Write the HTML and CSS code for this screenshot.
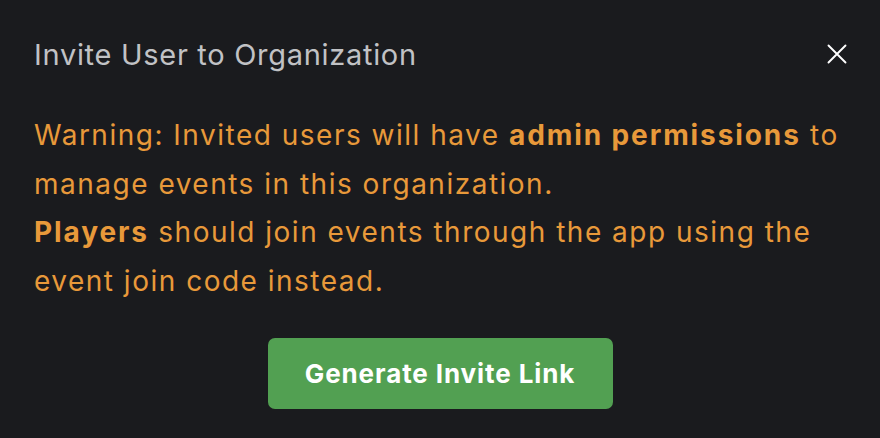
FILE: index.html
```html
<!DOCTYPE html>
<html>
<head>
<meta charset="utf-8">
<link rel="stylesheet" href="styles.css">
</head>
<body>
<div class="modal">
  <div class="header">
    <h2 class="title">Invite User to Organization</h2>
    <button class="close" aria-label="Close">
      <svg width="20" height="20" viewBox="0 0 20 20"><path d="M1.5 1.5 L18.5 18.5 M18.5 1.5 L1.5 18.5" stroke="#ffffff" stroke-width="1.9" stroke-linecap="round"/></svg>
    </button>
  </div>
  <div class="warning">
    <p>Warning: Invited users will have <strong>admin permissions</strong> to manage events in this organization.</p>
    <p><strong>Players</strong> should join events through the app using the event join code instead.</p>
  </div>
  <div class="actions">
    <button class="generate">Generate Invite Link</button>
  </div>
</div>
</body>
</html>
```
FILE: styles.css
```css
html, body {
  margin: 0;
  padding: 0;
  background: #1a1b1e;
  height: 100%;
}
body {
  font-family: Inter, "Noto Sans", sans-serif;
}
.modal {
  padding: 0 34px;
  box-sizing: border-box;
  width: 880px;
  height: 438px;
}
.header {
  display: flex;
  align-items: center;
  justify-content: space-between;
  height: 108px;
}
.title {
  margin: 0;
  font-size: 29px;
  letter-spacing: 0.7px;
  font-weight: 400;
  color: #c1c2c5;
}
.close {
  background: none;
  border: 0;
  padding: 0;
  margin-right: -1px;
  display: flex;
}
.warning {
  color: #e8993a;
  font-size: 28px;
  letter-spacing: 1.5px;
  line-height: 48.5px;
  margin-top: 3px;
}
.warning p {
  margin: 0;
}
.warning strong {
  font-weight: 700;
  letter-spacing: 1.9px;
}
.actions {
  display: flex;
  justify-content: center;
  margin-top: 33px;
}
.generate {
  width: 345px;
  height: 71px;
  background: #52a052;
  border: 0;
  border-radius: 7px;
  color: #ffffff;
  font-family: Inter, "Noto Sans", sans-serif;
  font-size: 26px;
  letter-spacing: 0.9px;
  font-weight: 700;
}
```
